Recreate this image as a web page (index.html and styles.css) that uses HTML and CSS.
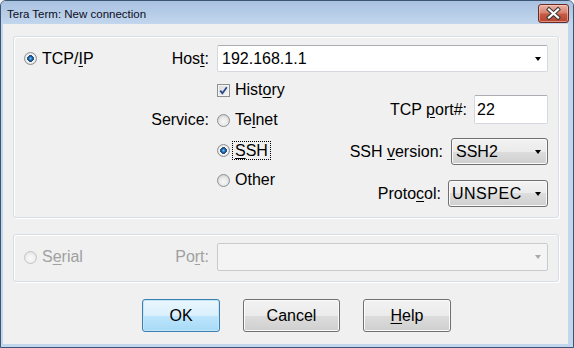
FILE: index.html
```html
<!DOCTYPE html>
<html lang="en">
<head>
    <meta charset="UTF-8">
    <title>Tera Term: New connection</title>
    <link rel="stylesheet" href="styles.css">
</head>
<body>
    <div class="window">
        <div class="titlebar">
            <span class="title">Tera Term: New connection</span>
            <button class="close-btn">
                <svg width="29" height="17" viewBox="0 0 29 17">
                    <path d="M10 4.5 L19 12.5 M19 4.5 L10 12.5" stroke="#3a3a3a" stroke-width="4.2" stroke-linecap="square"/>
                    <path d="M10 4.5 L19 12.5 M19 4.5 L10 12.5" stroke="#ffffff" stroke-width="2.2" stroke-linecap="square"/>
                </svg>
            </button>
        </div>
        <div class="frame">
            <div class="client">
                <div class="group group-tcp">
                    <div class="row">
                        <div class="col-a">
                            <span class="opt-inline"><span class="radio checked"></span>TCP/<u>I</u>P</span>
                            <span>Hos<u>t</u>:</span>
                        </div>
                        <div class="combo">
                            <span>192.168.1.1</span>
                            <span class="arrow"></span>
                        </div>
                    </div>
                    <div class="lower">
                        <div class="svc-label">Service:</div>
                        <div class="option-list">
                            <div class="opt">
                                <span class="checkbox">
                                    <svg width="11" height="11" viewBox="0 0 11 11">
                                        <path d="M2.2 5.6 L4.4 8.2 L8.8 2.2" fill="none" stroke="#2c4a8c" stroke-width="1.8"/>
                                    </svg>
                                </span>Hist<u>o</u>ry
                            </div>
                            <div class="opt"><span class="radio"></span>Te<u>l</u>net</div>
                            <div class="opt"><span class="radio checked"></span><span class="focus"><u>S</u>SH</span></div>
                            <div class="opt"><span class="radio"></span>Other</div>
                        </div>
                        <div class="right-col">
                            <div class="pair">
                                <span>TCP <u>p</u>ort#:</span>
                                <span class="textbox">22</span>
                            </div>
                            <div class="pair pair-ver">
                                <span>SSH <u>v</u>ersion:</span>
                                <div class="dropdown dropdown-ver">SSH2<span class="arrow"></span></div>
                            </div>
                            <div class="pair pair-proto">
                                <span>Proto<u>c</u>ol:</span>
                                <div class="dropdown dropdown-proto">UNSPEC<span class="arrow"></span></div>
                            </div>
                        </div>
                    </div>
                </div>
                <div class="group group-serial">
                    <div class="row row-serial">
                        <div class="col-a disabled">
                            <span class="opt-inline"><span class="radio radio-off"></span>S<u>e</u>rial</span>
                            <span>Po<u>r</u>t:</span>
                        </div>
                        <div class="combo combo-off">
                            <span></span>
                            <span class="arrow arrow-off"></span>
                        </div>
                    </div>
                </div>
                <div class="buttons">
                    <button class="btn btn-default">OK</button>
                    <button class="btn btn-cancel">Cancel</button>
                    <button class="btn btn-help"><u>H</u>elp</button>
                </div>
            </div>
        </div>
    </div>
</body>
</html>
```

FILE: styles.css
```css
body {
    margin: 0;
    padding: 0;
    background-color: #f0f0f0;
    font-family: "Liberation Sans", Arial, sans-serif;
    font-size: 16px;
    color: #000;
}
u {
    text-decoration-thickness: 1px;
    text-underline-offset: 2px;
}
.window {
    width: 574px;
    height: 348px;
    box-sizing: border-box;
    border: 1px solid #3b5572;
    border-radius: 6px 6px 0 0;
    background-color: #c2d6ed;
    display: flex;
    flex-direction: column;
    overflow: hidden;
}
.titlebar {
    height: 23px;
    flex: none;
    display: flex;
    align-items: flex-start;
    background: linear-gradient(#a9c2e1, #c2d6ed);
}
.title {
    font-size: 11.5px;
    line-height: 14px;
    margin: 6px 0 0 6px;
    color: #0d0d1e;
}
.close-btn {
    margin: 3px 4px 0 auto;
    width: 31px;
    height: 19px;
    padding: 0;
    border: 1px solid #6a2a1f;
    border-radius: 3px;
    background: linear-gradient(#e9b2a4 0%, #d98270 45%, #c55a44 55%, #b8432d 100%);
    box-shadow: inset 0 0 0 1px rgba(255, 220, 210, 0.5);
    display: flex;
    align-items: center;
    justify-content: center;
}
.frame {
    flex: 1;
    display: flex;
    padding: 0 5px 3px 2px;
}
.client {
    flex: 1;
    background-color: #f0f0f0;
    padding: 12px 9px 0 10px;
    display: flex;
    flex-direction: column;
}
.group {
    box-sizing: border-box;
    border: 1px solid #d5dfe5;
    border-radius: 3px;
    box-shadow: inset 1px 1px 0 #fff, 1px 1px 0 #fff;
    padding: 8px 10px 0 10px;
}
.group-tcp {
    height: 182px;
}
.group-serial {
    height: 48px;
    margin-top: 16px;
}
.row {
    display: flex;
    align-items: center;
    height: 27px;
}
.row-serial {
    height: 28px;
}
.col-a {
    width: 185px;
    flex: none;
    margin-right: 8px;
    display: flex;
    align-items: center;
    justify-content: space-between;
}
.disabled {
    color: #a0a0a0;
}
.opt-inline {
    display: flex;
    align-items: center;
}
.radio {
    width: 13px;
    height: 13px;
    flex: none;
    box-sizing: border-box;
    border-radius: 50%;
    border: 1px solid #8d9095;
    background: radial-gradient(circle at 50% 60%, #f8f8f8 0, #e9e9e9 4px, #d6d6d6 6px);
    margin-right: 5px;
}
.radio.checked {
    background: radial-gradient(circle at 50% 50%, #7cc6f7 0, #2273c0 1.6px, #144a86 2.6px, #3b5470 3.2px, #fbfbfb 3.6px, #e6e6e6 5px, #d2d2d2 6px);
}
.radio-off {
    border-color: #c2c4c6;
    background: radial-gradient(circle at 50% 60%, #fafafa 0, #f0f0f0 4px, #e6e6e6 6px);
}
.checkbox {
    width: 13px;
    height: 13px;
    flex: none;
    box-sizing: border-box;
    border: 1px solid #8e8f8f;
    background: linear-gradient(135deg, #dadada, #f6f6f6);
    box-shadow: inset 0 0 0 1px #f4f4f4;
    margin-right: 5px;
    display: flex;
    align-items: center;
    justify-content: center;
}
.combo {
    flex: 1;
    height: 27px;
    box-sizing: border-box;
    border: 1px solid #d5d9df;
    border-top-color: #abadb3;
    border-radius: 2px;
    background-color: #fff;
    display: flex;
    align-items: center;
    padding-left: 4px;
}
.row-serial .combo {
    height: 28px;
}
.combo-off {
    background-color: #f4f4f4;
    border-color: #c8cbce;
}
.arrow {
    width: 0;
    height: 0;
    border-left: 3.5px solid transparent;
    border-right: 3.5px solid transparent;
    border-top: 4px solid #000;
    margin-left: auto;
    margin-right: 6px;
    flex: none;
}
.arrow-off {
    border-top-color: #a8a8a8;
}
.lower {
    display: flex;
    align-items: flex-start;
    margin-top: 3px;
}
.svc-label {
    width: 185px;
    flex: none;
    margin-right: 8px;
    text-align: right;
    padding-top: 30px;
    line-height: 30px;
}
.option-list {
    display: flex;
    flex-direction: column;
}
.opt {
    display: flex;
    align-items: center;
    height: 30px;
}
.focus {
    margin-left: -3px;
    padding: 0 2px;
    line-height: 17px;
    border: 1px dotted #000;
}
.right-col {
    margin-left: auto;
    margin-top: 20px;
    display: flex;
    flex-direction: column;
    align-items: flex-end;
}
.pair {
    display: flex;
    align-items: center;
}
.textbox {
    width: 74px;
    height: 29px;
    box-sizing: border-box;
    margin-left: 7px;
    padding-left: 2px;
    border: 1px solid #d5d9df;
    border-top-color: #abadb3;
    border-radius: 2px;
    background-color: #fff;
    display: flex;
    align-items: center;
}
.pair-ver {
    margin-top: 14px;
}
.pair-proto {
    margin-top: 15px;
}
.dropdown {
    height: 27px;
    box-sizing: border-box;
    border: 1px solid #707070;
    border-radius: 3px;
    background: linear-gradient(#f2f2f2 0%, #ebebeb 50%, #dddddd 50%, #cfcfcf 100%);
    box-shadow: inset 0 0 0 1px #fafafa;
    display: flex;
    align-items: center;
}
.dropdown-ver {
    width: 97px;
    margin-left: 8px;
    padding-left: 4px;
}
.dropdown-proto {
    width: 100px;
    margin-left: 7px;
    padding-left: 3px;
    letter-spacing: 0.5px;
}
.buttons {
    display: flex;
    margin-top: 17px;
    padding-left: 129px;
}
.btn {
    height: 33px;
    box-sizing: border-box;
    border: 1px solid #707070;
    border-radius: 3px;
    background: linear-gradient(#f2f2f2 0%, #ebebeb 50%, #dddddd 50%, #cfcfcf 100%);
    box-shadow: inset 0 0 0 1px #fbfbfb;
    font-family: "Liberation Sans", Arial, sans-serif;
    font-size: 16px;
    color: #000;
    padding: 0;
}
.btn-default {
    width: 78px;
    border-color: #3c7fb1;
    background: linear-gradient(#eaf6fd 0%, #d9f0fc 50%, #bee6fd 50%, #a7d9f5 100%);
    box-shadow: inset 0 0 0 1px #c4e5f6;
}
.btn-cancel {
    width: 97px;
    margin-left: 23px;
}
.btn-help {
    width: 88px;
    margin-left: 23px;
}
```
